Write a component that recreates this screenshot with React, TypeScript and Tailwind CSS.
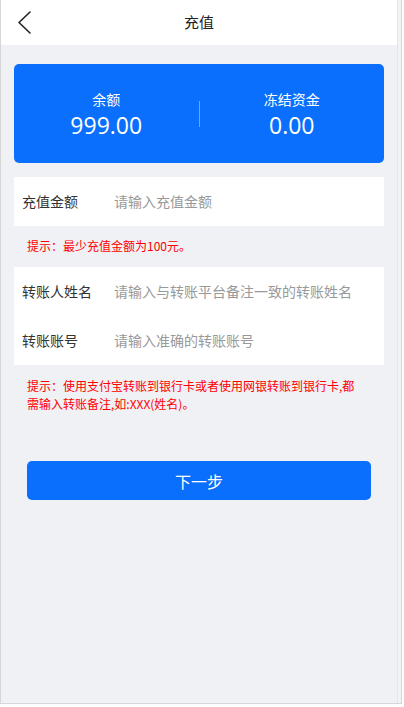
const font = { fontFamily: '"Noto Sans CJK SC", "Liberation Sans", sans-serif' };
const numFont = { fontFamily: '"Open Sans", "Liberation Sans", sans-serif' };

function Field({ label, placeholder }: { label: string; placeholder: string }) {
  return (
    <div className="flex h-[49px] items-center px-2">
      <span className="w-[92px] shrink-0 text-[14px] text-[#333]">{label}</span>
      <input
        className="min-w-0 flex-1 bg-transparent text-[14px] text-[#333] outline-none placeholder:text-[#999]"
        placeholder={placeholder}
      />
    </div>
  );
}

export default function App() {
  return (
    <div className="h-[707px] w-[404px] bg-white" style={font}>
      <div className="flex h-[704px] w-[402px] border-l border-b border-r border-[#d6d6d6]">
        <div className="flex w-[396px] flex-col bg-[#eff1f4]">
          {/* Header */}
          <header className="relative flex h-[45px] items-center justify-center bg-white">
            <svg className="absolute left-[15px] top-[10px] h-[25px] w-[18px]" viewBox="0 0 18 25" fill="none">
              <polyline points="14,2 3,12.5 14,23" stroke="#222" strokeWidth="1.6" strokeLinecap="round" strokeLinejoin="round" />
            </svg>
            <h1 className="text-[15px] text-[#222]">充值</h1>
          </header>

          {/* Balance card */}
          <div className="mx-[13px] mt-[19px] flex h-[99px] items-center rounded-[5px] bg-[#0a6ffd] text-white">
            <div className="flex flex-1 flex-col items-center gap-[6px]">
              <span className="text-[14px] leading-[16px]">余额</span>
              <span className="text-[23px] leading-[24px]" style={numFont}>999.00</span>
            </div>
            <div className="h-[26px] w-px bg-white/40" />
            <div className="flex flex-1 flex-col items-center gap-[6px]">
              <span className="text-[14px] leading-[16px]">冻结资金</span>
              <span className="text-[23px] leading-[24px]" style={numFont}>0.00</span>
            </div>
          </div>

          {/* Amount */}
          <div className="mx-[13px] mt-[14px] bg-white">
            <Field label="充值金额" placeholder="请输入充值金额" />
          </div>
          <p className="mx-[26px] mt-[10px] text-[12px] leading-[20px] text-[#f00]">提示：最少充值金额为100元。</p>

          {/* Transfer info */}
          <div className="mx-[13px] mt-[11px] bg-white">
            <Field label="转账人姓名" placeholder="请输入与转账平台备注一致的转账姓名" />
            <Field label="转账账号" placeholder="请输入准确的转账账号" />
          </div>
          <p className="ml-[26px] mr-[32px] mt-[12px] text-[12px] leading-[18px] text-[#f00]">
            提示：使用支付宝转账到银行卡或者使用网银转账到银行卡,都需输入转账备注,如:XXX(姓名)。
          </p>

          <button className="mx-[26px] mt-[48px] h-[39px] rounded-[5px] bg-[#0a6ffd] text-[16px] text-white">
            下一步
          </button>
        </div>
        <div className="w-[4px] border-l border-[#e6e6e6] bg-[#f3f3f3]" />
      </div>
    </div>
  );
}
